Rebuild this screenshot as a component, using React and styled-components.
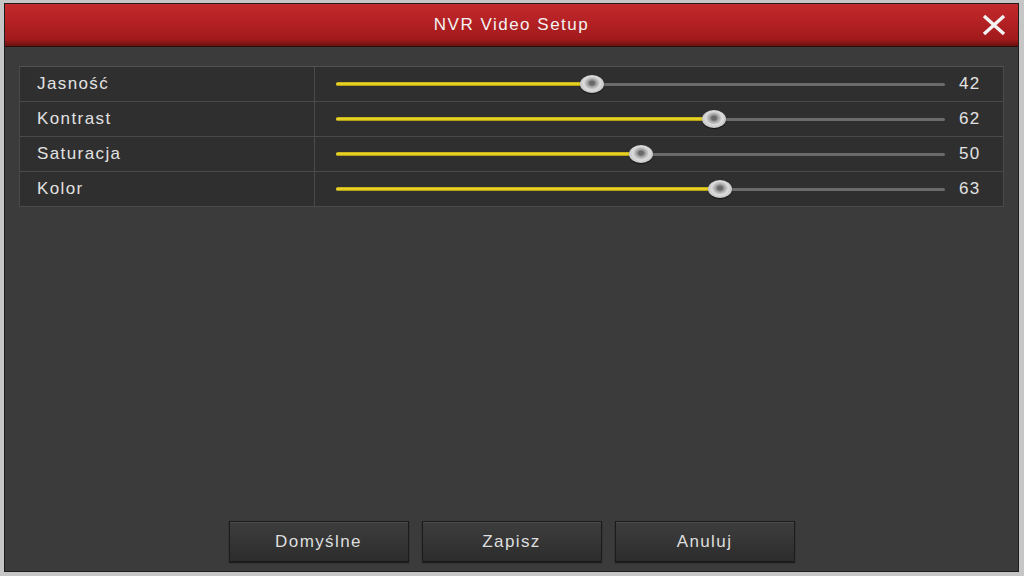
import React from "react";
import styled, { createGlobalStyle } from "styled-components";

const GlobalStyle = createGlobalStyle`
  html, body {
    margin: 0;
    padding: 0;
    background: #c6c6c6;
  }
  body {
    font-family: "Liberation Sans", Arial, sans-serif;
  }
`;

const Page = styled.div`
  width: 1024px;
  height: 576px;
  box-sizing: border-box;
  padding: 3px 5px 4px 4px;
  background: #c6c6c6;
  display: flex;
`;

const Dialog = styled.div`
  flex: 1;
  display: flex;
  flex-direction: column;
  background: #3b3b3b;
  border: 1px solid #1d1d1d;
  box-shadow: inset 0 0 0 1px #2a2a2a;
`;

const TitleBar = styled.div`
  height: 43px;
  flex-shrink: 0;
  position: relative;
  display: flex;
  align-items: center;
  justify-content: center;
  box-sizing: border-box;
  background: linear-gradient(180deg, #c22a2d 0%, #b32023 45%, #a11a1c 85%, #6a1010 100%);
  border-bottom: 1px solid #2a0c0c;
  color: #f2f2f2;
  font-size: 17px;
  letter-spacing: 1.5px;
`;

const CloseButton = styled.button`
  position: absolute;
  right: 10px;
  top: 8px;
  width: 28px;
  height: 26px;
  padding: 0;
  border: none;
  background: none;
  display: flex;
  align-items: center;
  justify-content: center;
`;

const Body = styled.div`
  flex: 1;
  display: flex;
  flex-direction: column;
  padding: 19px 14px 9px 14px;
  background: #3b3b3b;
`;

const Table = styled.div`
  display: grid;
  grid-template-columns: 294px 1fr;
  gap: 1px;
  background: #4a4a4a;
  border: 1px solid #4a4a4a;
  border-top-color: #525252;
`;

const LabelCell = styled.div`
  height: 34px;
  display: flex;
  align-items: center;
  padding-left: 17px;
  background: #2f2f2f;
  color: #e2e2e2;
  font-size: 17px;
  letter-spacing: 1.4px;
`;

const SliderCell = styled.div`
  height: 34px;
  display: flex;
  align-items: center;
  padding: 0 18px 0 21px;
  background: #2f2f2f;
`;

const Track = styled.div`
  position: relative;
  flex: 1;
  height: 3px;
  background: #6b6b6b;
  border-radius: 2px;
`;

const Fill = styled.div`
  position: absolute;
  left: 0;
  top: -0.5px;
  height: 4px;
  background: linear-gradient(180deg, #b9a414 0%, #f1dc2a 45%, #d9c31c 75%, #8f7f10 100%);
  border-radius: 2px 0 0 2px;
`;

const Knob = styled.div`
  position: absolute;
  top: 50%;
  width: 24px;
  height: 18px;
  transform: translate(-50%, -50%);
  border-radius: 50%;
  background: radial-gradient(ellipse at 50% 45%, #6a6a6a 0 14%, #9a9a9a 24%, #dcdcdc 48%, #c4c4c4 72%, #8c8c8c 100%);
  box-shadow: 0 1px 1px rgba(0, 0, 0, 0.6);
`;

const Value = styled.span`
  width: 26px;
  margin-left: 14px;
  color: #e2e2e2;
  font-size: 17px;
  letter-spacing: 1.4px;
`;

const Spacer = styled.div`
  flex: 1;
`;

const ButtonRow = styled.div`
  display: flex;
  justify-content: center;
  gap: 13px;
`;

const Button = styled.button`
  width: 180px;
  height: 41px;
  background: linear-gradient(180deg, #3d3d3d 0%, #353535 50%, #2c2c2c 100%);
  border: 1px solid #1b1b1b;
  box-shadow: inset 0 1px 0 #4a4a4a, 0 1px 1px rgba(0, 0, 0, 0.5);
  color: #dedede;
  font-family: "Liberation Sans", Arial, sans-serif;
  font-size: 17px;
  letter-spacing: 1.4px;
`;

const settings = [
  { label: "Jasność", value: 42 },
  { label: "Kontrast", value: 62 },
  { label: "Saturacja", value: 50 },
  { label: "Kolor", value: 63 },
];

function Slider({ value }) {
  return (
    <SliderCell>
      <Track>
        <Fill style={{ width: `${value}%` }} />
        <Knob style={{ left: `${value}%` }} />
      </Track>
      <Value>{value}</Value>
    </SliderCell>
  );
}

export default function App() {
  return (
    <>
      <GlobalStyle />
      <Page>
        <Dialog>
          <TitleBar>
            NVR Video Setup
            <CloseButton aria-label="close">
              <svg width="26" height="22" viewBox="0 0 26 22">
                <path
                  d="M3 2 L23 20 M23 2 L3 20"
                  stroke="#f4f4f4"
                  strokeWidth="3.4"
                  strokeLinecap="butt"
                />
              </svg>
            </CloseButton>
          </TitleBar>
          <Body>
            <Table>
              {settings.map(({ label, value }) => (
                <React.Fragment key={label}>
                  <LabelCell>{label}</LabelCell>
                  <Slider value={value} />
                </React.Fragment>
              ))}
            </Table>
            <Spacer />
            <ButtonRow>
              <Button>Domyślne</Button>
              <Button>Zapisz</Button>
              <Button>Anuluj</Button>
            </ButtonRow>
          </Body>
        </Dialog>
      </Page>
    </>
  );
}
